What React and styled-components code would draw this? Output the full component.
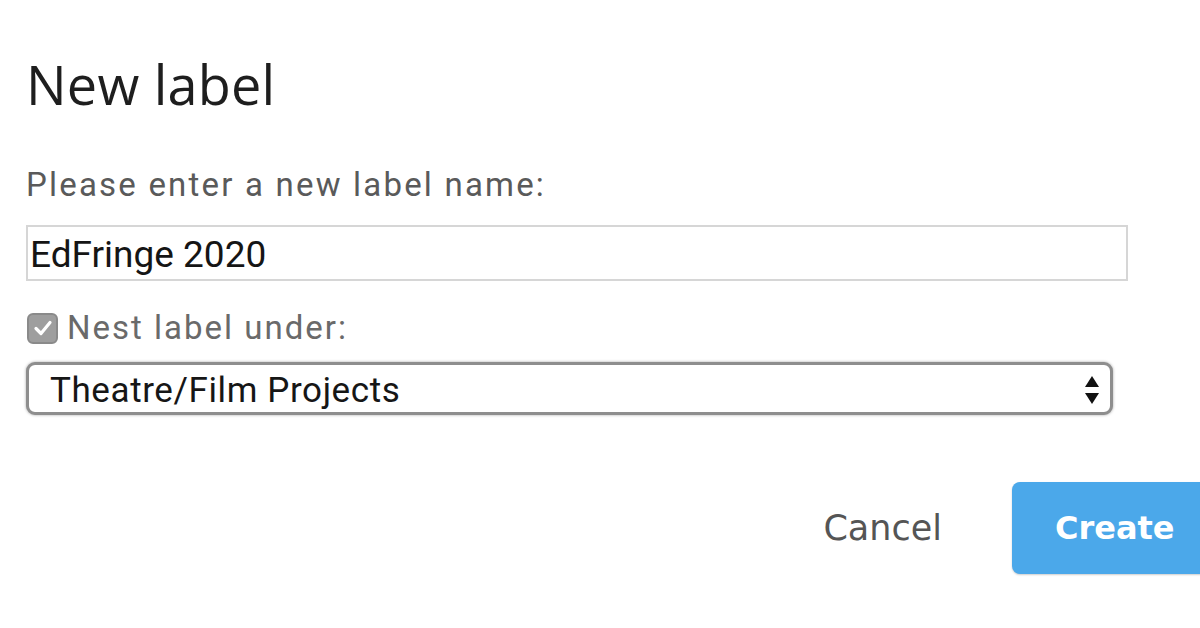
import styled, { createGlobalStyle } from "styled-components";

const GlobalStyle = createGlobalStyle`
  html, body {
    margin: 0;
    padding: 0;
    background: #fff;
    overflow: hidden;
  }
`;

const Dialog = styled.div`
  width: 1200px;
  height: 628px;
  box-sizing: border-box;
  padding: 52px 0 0 26px;
  display: flex;
  flex-direction: column;
  font-family: Roboto, "Liberation Sans", sans-serif;
`;

const Title = styled.h1`
  margin: 0;
  font-family: "Open Sans", sans-serif;
  font-weight: 400;
  font-size: 54px;
  line-height: 64px;
  color: #1e1e1e;
  letter-spacing: 0.2px;
`;

const Prompt = styled.label`
  margin-top: 49px;
  font-size: 33px;
  line-height: 40px;
  color: #5a5a5a;
  letter-spacing: 2.2px;
`;

const TextInput = styled.div`
  margin-top: 20px;
  width: 1102px;
  height: 56px;
  box-sizing: border-box;
  border: 2px solid #d6d6d6;
  padding: 2px 0 0 2px;
  display: flex;
  align-items: center;
  font-size: 37px;
  color: #151515;
`;

const CheckRow = styled.div`
  margin-top: 29px;
  display: flex;
  align-items: center;
  gap: 9px;
  font-size: 33px;
  line-height: 36px;
  color: #6a6a6a;
  letter-spacing: 2px;
`;

const CheckBox = styled.span`
  width: 31px;
  height: 31px;
  box-sizing: border-box;
  border-radius: 6px;
  background: #9e9e9e;
  border: 2px solid #8a8a8a;
  display: flex;
  align-items: center;
  justify-content: center;
  margin-left: 1px;
`;

const Select = styled.div`
  margin-top: 16px;
  width: 1087px;
  height: 53px;
  box-sizing: border-box;
  border: 3px solid #8e8e8e;
  border-radius: 9px;
  box-shadow: 0 0 3px rgba(0, 0, 0, 0.35);
  display: flex;
  align-items: center;
  justify-content: space-between;
  padding: 3px 10px 0 21px;
  font-size: 35px;
  letter-spacing: 0.6px;
  color: #161616;
  background: #fff;
`;

const Actions = styled.div`
  margin-top: 67px;
  margin-right: -10px;
  display: flex;
  justify-content: flex-end;
  align-items: center;
  gap: 70px;
  font-family: "DejaVu Sans", Verdana, sans-serif;
`;

const TextButton = styled.button`
  border: none;
  background: none;
  padding: 0;
  font-family: inherit;
  font-size: 35px;
  color: #555;
`;

const PrimaryButton = styled.button`
  width: 198px;
  height: 92px;
  border: none;
  border-radius: 8px;
  background: #4ba8ea;
  color: #fff;
  font-family: inherit;
  font-weight: 700;
  font-size: 32px;
  text-align: left;
  padding: 0 0 0 43px;
  box-shadow: 0 1px 2px rgba(0, 0, 0, 0.2);
`;

export default function App() {
  return (
    <>
      <GlobalStyle />
      <Dialog>
        <Title>New label</Title>
        <Prompt>Please enter a new label name:</Prompt>
        <TextInput>EdFringe 2020</TextInput>
        <CheckRow>
          <CheckBox>
            <svg width="20" height="18" viewBox="0 0 20 18">
              <path d="M3 9.5 L8 14.5 L17 3.5" fill="none" stroke="#fff" strokeWidth="3.2" strokeLinecap="round" strokeLinejoin="round" />
            </svg>
          </CheckBox>
          Nest label under:
        </CheckRow>
        <Select>
          Theatre/Film Projects
          <svg width="16" height="32" viewBox="0 0 16 32">
            <path d="M8 2 L15 13 L1 13 Z" fill="#111" />
            <path d="M1 19 L15 19 L8 30 Z" fill="#111" />
          </svg>
        </Select>
        <Actions>
          <TextButton>Cancel</TextButton>
          <PrimaryButton>Create</PrimaryButton>
        </Actions>
      </Dialog>
    </>
  );
}
